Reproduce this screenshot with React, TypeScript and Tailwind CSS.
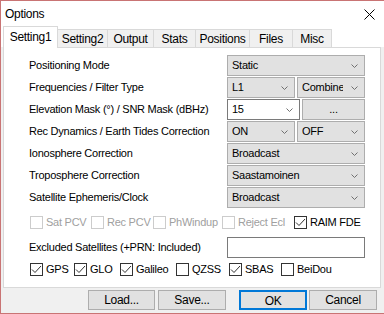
import React from 'react'

const tahoma = "font-['Liberation_Sans',Arial,sans-serif] text-[11px] tracking-[-0.25px]"
const segoe = "font-['Liberation_Sans',Arial,sans-serif] text-[12px] tracking-[-0.3px]"

function Chevron() {
  return (
    <svg width="7" height="4" viewBox="0 0 7 4" className="shrink-0">
      <path d="M0.5 0.5 L3.5 3.5 L6.5 0.5" stroke="#707070" strokeWidth="1" fill="none" />
    </svg>
  )
}

function Combo({ text, edit = false }: { text: string; edit?: boolean }) {
  return (
    <div
      className={`flex h-[21px] min-w-0 flex-1 items-center border pl-[4px] pr-[6px] ${
        edit ? 'border-[#7a7a7a] bg-white' : 'border-[#adadad] bg-[#e1e1e1]'
      }`}
    >
      <span className={`${tahoma} mr-[8px] min-w-0 flex-1 overflow-hidden whitespace-nowrap text-black`}>{text}</span>
      <Chevron />
    </div>
  )
}

function Check({ label, checked = false, disabled = false, width }: { label: string; checked?: boolean; disabled?: boolean; width?: string }) {
  return (
    <div className={`flex items-center gap-[3px] ${width ?? ''}`}>
      <div
        className={`flex h-[13px] w-[13px] shrink-0 items-center justify-center border bg-white ${
          disabled ? 'border-[#cccccc]' : 'border-[#333333]'
        }`}
      >
        {checked && (
          <svg width="11" height="11" viewBox="0 0 11 11">
            <path d="M1 5.5 L4 8.5 L10 2" stroke="#333333" strokeWidth="1" fill="none" />
          </svg>
        )}
      </div>
      <span className={`${tahoma} whitespace-nowrap ${disabled ? 'text-[#a0a0a0]' : 'text-black'}`}>{label}</span>
    </div>
  )
}

function Row({ label, children }: { label: string; children: React.ReactNode }) {
  return (
    <div className="flex h-[22px] items-start">
      <div className={`${tahoma} flex h-[21px] w-[198px] items-center text-black`}>{label}</div>
      <div className="flex w-[138px] gap-[2px]">{children}</div>
    </div>
  )
}

const tabs = [
  { name: 'Setting1', w: 'w-[55px]' },
  { name: 'Setting2', w: 'w-[51px]' },
  { name: 'Output', w: 'w-[47px]' },
  { name: 'Stats', w: 'w-[43px]' },
  { name: 'Positions', w: 'w-[55px]' },
  { name: 'Files', w: 'w-[44px]' },
  { name: 'Misc', w: 'w-[40px]' },
]

export default function App() {
  return (
    <div className="flex h-[314px] w-[384px] flex-col overflow-hidden border-b border-l border-t border-[#c97474] bg-[#f0f0f0]">
      {/* Title bar */}
      <div className="flex h-[26px] shrink-0 items-center justify-between bg-white pl-[4px] pr-[9px]">
        <span className={`${segoe} text-black`}>Options</span>
        <svg width="11" height="11" viewBox="0 0 11 11">
          <path d="M0.5 0.5 L10.5 10.5 M10.5 0.5 L0.5 10.5" stroke="#000" strokeWidth="1" />
        </svg>
      </div>

      {/* Tab strip */}
      <div className="flex h-[20px] shrink-0 items-end bg-white pl-[2px]">
        {tabs.map((t, i) =>
          i === 0 ? (
            <div
              key={t.name}
              className={`${segoe} relative z-10 -mb-px flex h-[22px] ${t.w} items-center justify-center border-l border-r border-t border-[#d9d9d9] bg-white pb-[1px] text-black`}
            >
              {t.name}
            </div>
          ) : (
            <div
              key={t.name}
              className={`${segoe} -ml-px flex h-[18px] ${t.w} items-center justify-center border-l border-r border-t border-[#d9d9d9] bg-[#f0f0f0] text-black`}
            >
              {t.name}
            </div>
          )
        )}
      </div>

      {/* Panel */}
      <div className="ml-[2px] flex h-[241px] w-[378px] shrink-0 flex-col border border-[#d9d9d9] bg-white pl-[25px] pt-[7px]">
        <Row label="Positioning Mode">
          <Combo text="Static" />
        </Row>
        <Row label="Frequencies / Filter Type">
          <Combo text="L1" />
          <Combo text="Combined" />
        </Row>
        <Row label="Elevation Mask (°) / SNR Mask (dBHz)">
          <Combo text="15" edit />
          <div className={`${tahoma} flex h-[21px] flex-1 items-center justify-center border border-[#adadad] bg-[#e1e1e1] text-black`}>
            ...
          </div>
        </Row>
        <Row label="Rec Dynamics / Earth Tides Correction">
          <Combo text="ON" />
          <Combo text="OFF" />
        </Row>
        <Row label="Ionosphere Correction">
          <Combo text="Broadcast" />
        </Row>
        <Row label="Troposphere Correction">
          <Combo text="Saastamoinen" />
        </Row>
        <Row label="Satellite Ephemeris/Clock">
          <Combo text="Broadcast" />
        </Row>

        <div className="flex h-[26px] items-center pl-[1px]">
          <Check label="Sat PCV" disabled width="w-[61px]" />
          <Check label="Rec PCV" disabled width="w-[62px]" />
          <Check label="PhWindup" disabled width="w-[69px]" />
          <Check label="Reject Ecl" disabled width="w-[72px]" />
          <Check label="RAIM FDE" checked />
        </div>

        <div className="mt-[2px] flex h-[21px] items-center">
          <div className={`${tahoma} w-[198px] text-black`}>Excluded Satellites (+PRN: Included)</div>
          <div className="h-[21px] w-[138px] border border-[#7a7a7a] bg-white" />
        </div>

        <div className="mt-[1px] flex h-[21px] items-center pl-[1px]">
          <Check label="GPS" checked width="w-[44px]" />
          <Check label="GLO" checked width="w-[46px]" />
          <Check label="Galileo" checked width="w-[56px]" />
          <Check label="QZSS" width="w-[53px]" />
          <Check label="SBAS" checked width="w-[52px]" />
          <Check label="BeiDou" />
        </div>
      </div>

      {/* Buttons */}
      <div className="flex flex-1 items-start pl-[87px] pt-[2px]">
        <button className={`${segoe} h-[20px] w-[67px] border border-[#adadad] bg-[#e1e1e1] text-black`}>Load...</button>
        <button className={`${segoe} ml-[3px] h-[20px] w-[68px] border border-[#adadad] bg-[#e1e1e1] text-black`}>Save...</button>
        <button className={`${segoe} ml-[13px] h-[20px] w-[68px] border-2 border-[#0078d7] bg-[#e1e1e1] text-black`}>OK</button>
        <button className={`${segoe} ml-[2px] h-[20px] w-[68px] border border-[#adadad] bg-[#e1e1e1] text-black`}>Cancel</button>
      </div>
    </div>
  )
}
